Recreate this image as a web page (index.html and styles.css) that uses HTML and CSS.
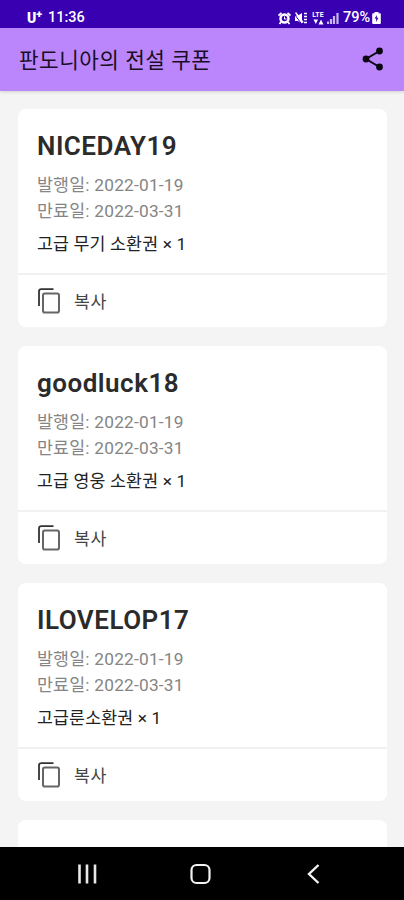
FILE: index.html
```html
<!DOCTYPE html>
<html lang="ko">
<head>
<meta charset="UTF-8">
<meta name="viewport" content="width=device-width, initial-scale=1.0">
<title>판도니아의 전설 쿠폰</title>
<link rel="stylesheet" href="styles.css">
</head>
<body>
<svg class="symbols">
  <symbol id="copy" viewBox="0 0 24 26">
    <path d="M2 18V3.5Q2 1.2 4.3 1.2H16.500" fill="none" stroke="#333" stroke-width="1.8"/>
    <rect x="6" y="5.600" width="16" height="19" rx="1.800" fill="none" stroke="#666" stroke-width="2"/>
  </symbol>
</svg>
<div class="status-bar">
  <div class="carrier">U<span class="plus">+</span></div>
  <div class="clock">11:36</div>
  <div class="status-icons">
    <svg class="alarm" width="13" height="13" viewBox="0 0 13 13">
      <path d="M0.500 3.500L3.500 0.800M12.500 3.500L9.500 0.800M3 10L1.500 12M10 10L11.500 12" stroke="#fff" stroke-width="1.8"/>
      <circle cx="6.500" cy="6.500" r="4" fill="none" stroke="#fff" stroke-width="2.500"/>
      <path d="M6.500 4.500V7H8.500" fill="none" stroke="#fff"/>
    </svg>
    <svg class="mute" width="13" height="13" viewBox="0 0 13 13">
      <path d="M0 3.500H3L7 1V12L3 9H0Z" fill="#fff"/>
      <path d="M0 3L7 12.500" stroke="#3900b1"/>
      <path d="M0.500 0.500L8 10.500" stroke="#fff" stroke-width="1.5"/>
      <path d="M9 1.500H12M9 4.500H12M9 7.500H12M9 10.500H12" stroke="#fff" stroke-width="1.5"/>
    </svg>
    <div class="lte"><span>LTE</span><svg width="11" height="6" viewBox="0 0 11 6"><path d="M0.500 0.500H5L2.800 5ZM5.500 5.500H10.500L8 0.500Z" fill="#fff"/></svg></div>
    <svg class="signal" width="12" height="12" viewBox="0 0 12 12">
      <path d="M1 12V9.500M4 12V7M7 12V4M10.500 12V1" stroke="#c9b8f0" stroke-width="2.200"/>
    </svg>
    <span class="percent">79%</span>
    <svg class="battery" width="9" height="12" viewBox="0 0 9 12">
      <path d="M2.500 0H6.500V1.200H8Q8.800 1.200 8.800 2V11Q8.800 12 8 12H1Q0.200 12 0.200 11V2Q0.200 1.200 1 1.200H2.500Z" fill="#fff"/>
      <path d="M5 3L2.500 6.500H4.200L4 10L6.500 5.800H4.800Z" fill="#3900b1"/>
    </svg>
  </div>
</div>
<header class="app-bar">
  <h1>판도니아의 전설 쿠폰</h1>
  <svg class="share" width="22" height="24" viewBox="0 0 22 24">
    <path d="M17.500 4L4 12L17.500 20" fill="none" stroke="#0b0712" stroke-width="2"/>
    <circle cx="17.500" cy="4" r="3.400" fill="#0b0712"/>
    <circle cx="4" cy="12" r="3.400" fill="#0b0712"/>
    <circle cx="17.500" cy="20" r="3.400" fill="#0b0712"/>
  </svg>
</header>
<main class="coupons">
  <div class="card">
    <div class="card-body">
      <h2>NICEDAY19</h2>
      <p class="date">발행일: 2022-01-19</p>
      <p class="date">만료일: 2022-03-31</p>
      <p class="reward">고급 무기 소환권 × 1</p>
    </div>
    <div class="copy">
      <svg width="24" height="26"><use href="#copy"/></svg>
      <span>복사</span>
    </div>
  </div>
  <div class="card">
    <div class="card-body">
      <h2>goodluck18</h2>
      <p class="date">발행일: 2022-01-19</p>
      <p class="date">만료일: 2022-03-31</p>
      <p class="reward">고급 영웅 소환권 × 1</p>
    </div>
    <div class="copy">
      <svg width="24" height="26"><use href="#copy"/></svg>
      <span>복사</span>
    </div>
  </div>
  <div class="card">
    <div class="card-body">
      <h2>ILOVELOP17</h2>
      <p class="date">발행일: 2022-01-19</p>
      <p class="date">만료일: 2022-03-31</p>
      <p class="reward">고급룬소환권 × 1</p>
    </div>
    <div class="copy">
      <svg width="24" height="26"><use href="#copy"/></svg>
      <span>복사</span>
    </div>
  </div>
  <div class="card"></div>
</main>
<nav class="nav-bar">
  <svg width="22" height="22" viewBox="0 0 22 22"><path d="M3.500 1.500V20.500M11 1.500V20.500M19 1.500V20.500" stroke="#e8e8e8" stroke-width="2.600"/></svg>
  <svg width="22" height="22" viewBox="0 0 22 22"><rect x="1.500" y="2" width="18" height="18" rx="5" fill="none" stroke="#f2f2f2" stroke-width="2.200"/></svg>
  <svg width="22" height="22" viewBox="0 0 22 22"><path d="M15.500 2L6 11L15.500 20" fill="none" stroke="#f2f2f2" stroke-width="2.400"/></svg>
</nav>
</body>
</html>
```

FILE: styles.css
```css
* {
  box-sizing: border-box;
}

body {
  display: flex;
  flex-direction: column;
  height: 900px;
  margin: 0;
  overflow: hidden;
  background-color: #f4f4f4;
  font-family: Roboto, "Noto Sans CJK KR", sans-serif;
}

h1, h2, p {
  margin: 0;
}

.symbols {
  display: none;
}

.status-bar {
  display: flex;
  flex: none;
  align-items: center;
  height: 28px;
  padding: 8px 23px 0 27px;
  background-color: #3900b1;
  color: #fff;
  font-size: 14.5px;
  line-height: 20px;
}

.carrier {
  display: flex;
  width: 21px;
  font-size: 14px;
  font-weight: 900;
}

.plus {
  font-size: 11px;
  line-height: 14px;
}

.clock {
  font-weight: 500;
}

.status-icons {
  display: flex;
  align-items: center;
  margin-left: auto;
}

.mute {
  margin-left: 4px;
}

.lte {
  display: flex;
  flex-direction: column;
  align-items: center;
  width: 12px;
  margin-left: 4px;
  font-size: 7px;
  font-weight: 700;
  line-height: 7px;
}

.signal {
  margin-left: 3px;
}

.percent {
  width: 29px;
  margin-left: 4px;
  font-weight: 500;
}

.app-bar {
  display: flex;
  flex: none;
  align-items: center;
  justify-content: space-between;
  z-index: 1;
  height: 63px;
  padding: 0 20px 2px 19px;
  background-color: #bb86fc;
  box-shadow: 0 1px 3px rgba(0, 0, 0, 0.15);
}

.app-bar h1 {
  color: #180e26;
  font-size: 21.3px;
  font-weight: 400;
  letter-spacing: 0.5px;
}

.coupons {
  display: flex;
  flex: 1;
  flex-direction: column;
  gap: 19px;
  min-height: 0;
  padding: 18px 17px 0 18px;
  overflow: hidden;
}

.card {
  flex: none;
  height: 218px;
  border-radius: 8px;
  background-color: #fff;
}

.card-body {
  height: 166px;
  padding: 20px 19px 0;
  border-bottom: 2px solid #f1f1f1;
}

.card h2 {
  height: 44px;
  color: #2b2b2b;
  font-size: 26px;
  font-weight: 600;
  letter-spacing: 0.5px;
  line-height: 35px;
}

.date {
  height: 25.5px;
  color: #858585;
  font-size: 17.3px;
  letter-spacing: 0.22px;
  line-height: 25.5px;
}

.reward {
  margin-top: 7px;
  color: #222;
  font-size: 17.3px;
  letter-spacing: 0.15px;
  line-height: 27px;
}

.copy {
  display: flex;
  align-items: center;
  gap: 13px;
  height: 51px;
  padding-left: 19px;
  color: #444;
  font-size: 17.3px;
  letter-spacing: 0.5px;
}

.nav-bar {
  display: flex;
  flex: none;
  align-items: center;
  justify-content: space-between;
  height: 53px;
  padding: 0 79px 0 76px;
  background-color: #000;
}
```
